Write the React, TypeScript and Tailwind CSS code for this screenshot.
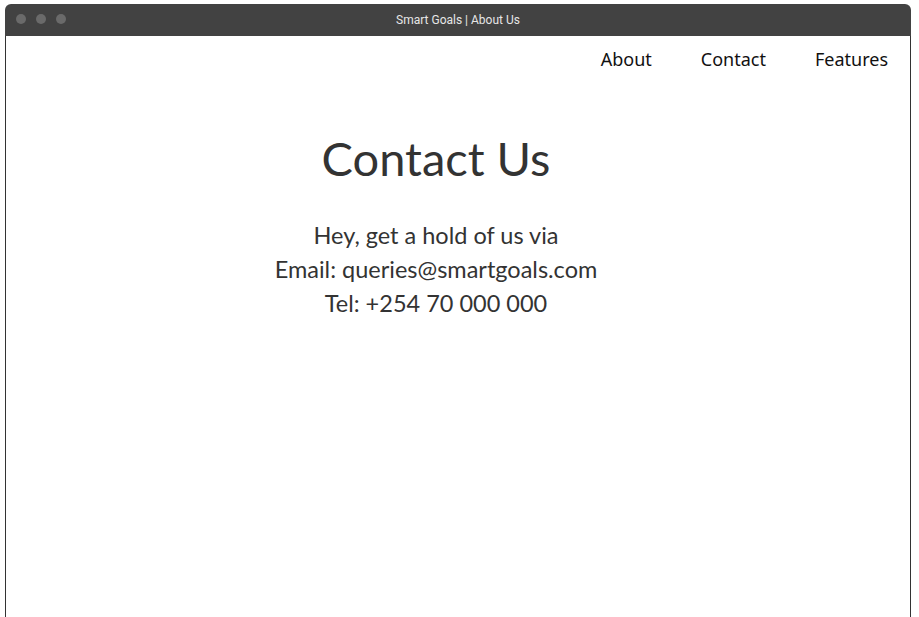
import { FunctionComponent } from 'react';

const TitleBar: FunctionComponent = () => {
    return (
        <div className="relative h-[32px] bg-[#424242] rounded-t-[6px] flex items-center">
            <div className="flex gap-[10px] pl-[11px] -mt-[2px]">
                <span className="w-[10px] h-[10px] rounded-full bg-[#6a6a6a]" />
                <span className="w-[10px] h-[10px] rounded-full bg-[#6a6a6a]" />
                <span className="w-[10px] h-[10px] rounded-full bg-[#6a6a6a]" />
            </div>
            <p className="absolute inset-x-0 -mt-[1px] text-center text-[12px] text-[#e6e6e6] font-['Roboto',sans-serif]">
                Smart Goals | About Us
            </p>
        </div>
    );
};

const App: FunctionComponent = () => {
    return (
        <div className="min-h-screen bg-white pl-[5px] pr-[8px] pt-[4px] flex flex-col">
            <div className="flex-1 flex flex-col">
                <TitleBar />
                <div className="flex-1 border-x border-[#333] bg-white font-['Lato',sans-serif] text-[#333]">
                    <nav className="flex justify-end gap-[49px] pr-[22px] pt-[10px] text-[18px] text-[#111] font-['Noto_Sans',sans-serif]">
                        <a href="#">About</a>
                        <a href="#">Contact</a>
                        <a href="#">Features</a>
                    </nav>
                    <main className="flex flex-col items-center mr-[44px] mt-[53px]">
                        <h1 className="text-[47px] leading-[64px]">Contact Us</h1>
                        <div className="mt-[28px] text-center text-[23.5px] leading-[34px]">
                            <p>Hey, get a hold of us via</p>
                            <p>Email: queries@smartgoals.com</p>
                            <p>Tel: +254 70 000 000</p>
                        </div>
                    </main>
                </div>
            </div>
        </div>
    );
};

export default App;
